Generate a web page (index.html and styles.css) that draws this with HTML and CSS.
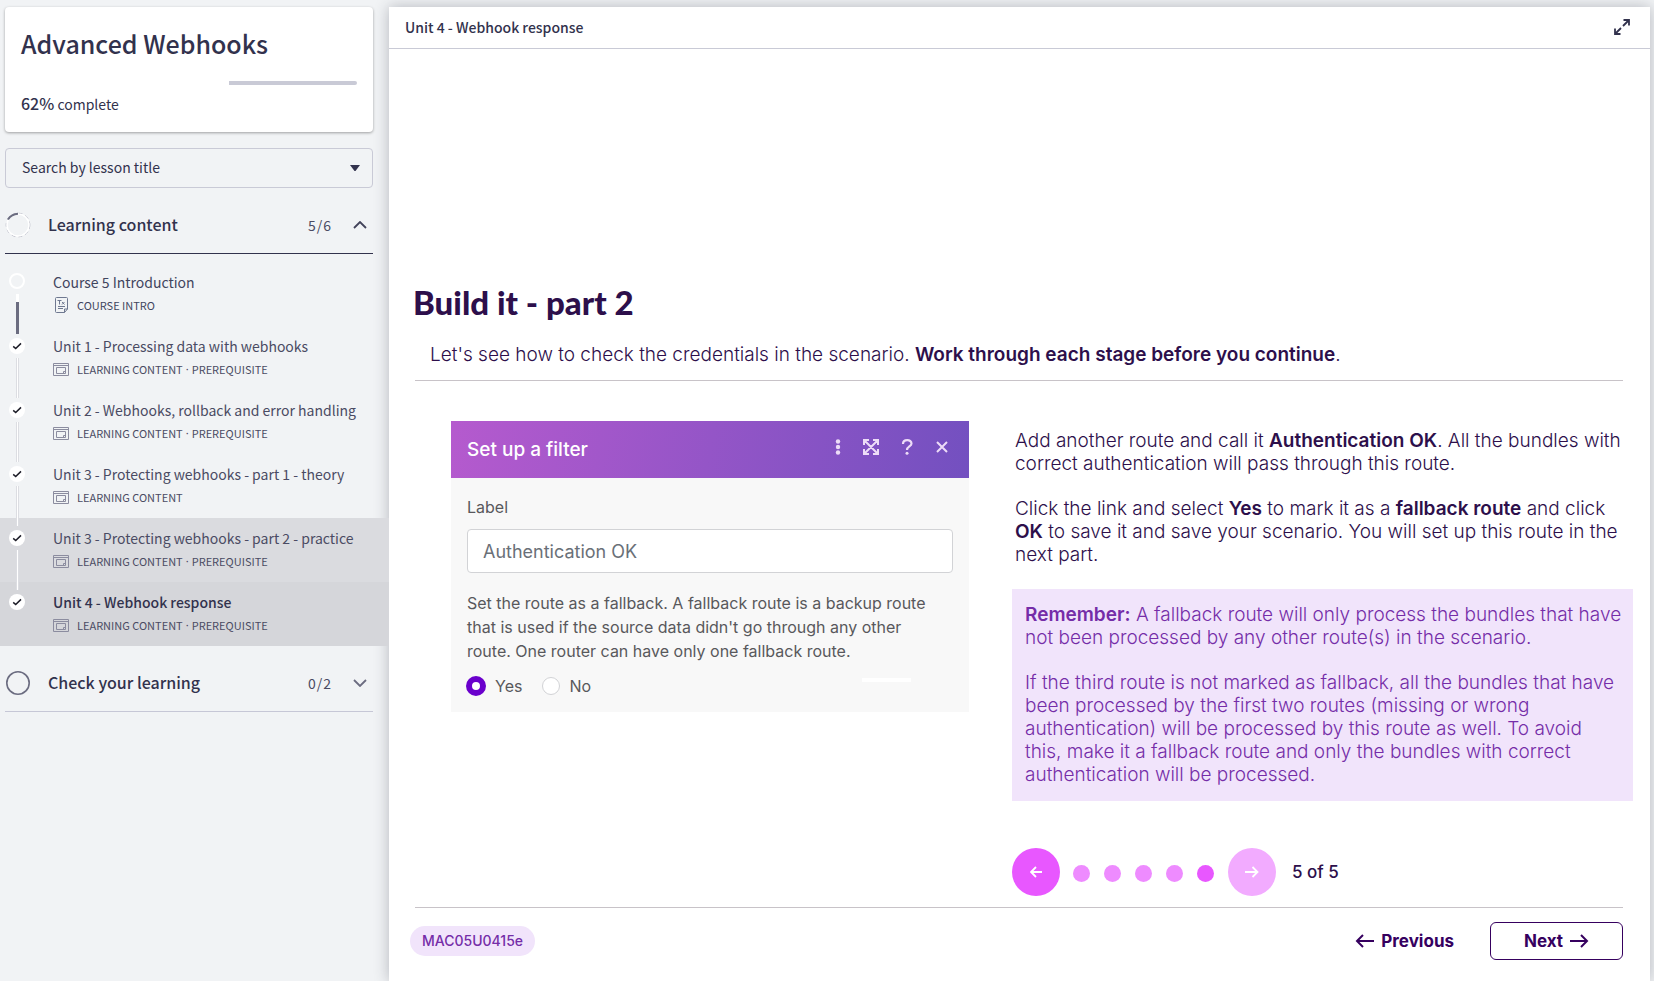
FILE: index.html
```html
<!DOCTYPE html>
<html lang="en">
<head>
<meta charset="utf-8">
<title>Advanced Webhooks</title>
<link rel="stylesheet" href="styles.css">
</head>
<body>
<svg class="sprite" aria-hidden="true">
  <symbol id="i-check" viewBox="0 0 16 16"><path d="M4.2 8.4 6.7 10.6 12 5.4" fill="none" stroke="#1d1d28" stroke-width="1.5"/></symbol>
  <symbol id="i-content" viewBox="0 0 16 13"><path d="M.5.5h15v12H.5zM.5 2.5h15M3.500 4.500h9v6h-9zM12.500 8.500h-2v2" fill="none" stroke="#8b8c9f"/></symbol>
  <symbol id="i-text" viewBox="0 0 13 16"><path d="M.5 1.500q0-1 1-1h10q1 0 1 1v10.500l-3 3.500H1.500q-1 0-1-1zM9.500 15.500v-3.500h3M3 9.500h7M3 11.500h5M2.500 3.500h4M4.500 3.500v4M7 5l2.500 2.500M9.500 5 7 7.500" fill="none" stroke="#6f7890"/></symbol>
  <symbol id="i-left" viewBox="0 0 20 14"><path d="M19 7H2M8 1 2 7l6 6" fill="none" stroke="currentColor" stroke-width="2"/></symbol>
  <symbol id="i-right" viewBox="0 0 20 14"><path d="M1 7h17M12 1l6 6-6 6" fill="none" stroke="currentColor" stroke-width="2"/></symbol>
</svg>
<div class="app">
  <aside class="sidebar">
    <section class="card">
      <h1 class="card-title">Advanced Webhooks</h1>
      <div class="progress"><div class="progress-rest" style="width:38%"></div></div>
      <p class="progress-text"><b>62%</b> complete</p>
    </section>
    <div class="search">
      <select class="search-select" aria-label="Search by lesson title"><option>Search by lesson title</option></select>
      <svg class="search-caret" width="10" height="6" viewBox="0 0 10 6"><path d="M0 0h10L5.500 6h-1z" fill="#32324d"/></svg>
    </div>

    <button class="section section-open" type="button">
      <svg width="26" height="26" viewBox="0 0 26 26" fill="none"><circle cx="13" cy="13" r="11.800" stroke="#b4b5c2" stroke-dasharray="4 3"/><circle cx="13" cy="13" r="11" stroke="#fff" stroke-width="1.500"/><path d="M3 7.500Q6.500 2 13 1.800" stroke="#6b6c80" stroke-width="2"/></svg>
      <span class="section-name">Learning content</span>
      <span class="section-count">5/6</span>
      <svg width="14" height="8" viewBox="0 0 14 8"><path d="M1 7l6-6 6 6" fill="none" stroke="#42435a" stroke-width="1.800"/></svg>
    </button>
    <ul class="lessons">
      <li class="lesson first">
        <span class="mark hollow"></span><span class="track"></span>
        <a class="lesson-link" href="#"><span class="lesson-title">Course 5 Introduction</span>
        <span class="meta"><span class="meta-icon"><svg width="13" height="16"><use href="#i-text"/></svg></span>COURSE INTRO</span></a>
      </li>
      <li class="lesson">
        <span class="mark"><svg width="16" height="16"><use href="#i-check"/></svg></span><span class="track"></span>
        <a class="lesson-link" href="#"><span class="lesson-title">Unit 1 - Processing data with webhooks</span>
        <span class="meta"><span class="meta-icon"><svg width="16" height="13"><use href="#i-content"/></svg></span>LEARNING CONTENT<i class="sep">·</i>PREREQUISITE</span></a>
      </li>
      <li class="lesson">
        <span class="mark"><svg width="16" height="16"><use href="#i-check"/></svg></span><span class="track"></span>
        <a class="lesson-link" href="#"><span class="lesson-title">Unit 2 - Webhooks, rollback and error handling</span>
        <span class="meta"><span class="meta-icon"><svg width="16" height="13"><use href="#i-content"/></svg></span>LEARNING CONTENT<i class="sep">·</i>PREREQUISITE</span></a>
      </li>
      <li class="lesson">
        <span class="mark"><svg width="16" height="16"><use href="#i-check"/></svg></span><span class="track"></span>
        <a class="lesson-link" href="#"><span class="lesson-title">Unit 3 - Protecting webhooks - part 1 - theory</span>
        <span class="meta"><span class="meta-icon"><svg width="16" height="13"><use href="#i-content"/></svg></span>LEARNING CONTENT</span></a>
      </li>
      <li class="lesson hover">
        <span class="mark"><svg width="16" height="16"><use href="#i-check"/></svg></span><span class="track"></span>
        <a class="lesson-link" href="#"><span class="lesson-title">Unit 3 - Protecting webhooks - part 2 - practice</span>
        <span class="meta"><span class="meta-icon"><svg width="16" height="13"><use href="#i-content"/></svg></span>LEARNING CONTENT<i class="sep">·</i>PREREQUISITE</span></a>
      </li>
      <li class="lesson current">
        <span class="mark"><svg width="16" height="16"><use href="#i-check"/></svg></span>
        <a class="lesson-link" href="#"><span class="lesson-title">Unit 4 - Webhook response</span>
        <span class="meta"><span class="meta-icon"><svg width="16" height="13"><use href="#i-content"/></svg></span>LEARNING CONTENT<i class="sep">·</i>PREREQUISITE</span></a>
      </li>
    </ul>
    <button class="section" type="button">
      <svg width="26" height="26" viewBox="0 0 26 26"><circle cx="13" cy="13" r="11.200" fill="none" stroke="#6b6c80" stroke-width="1.600"/></svg>
      <span class="section-name">Check your learning</span>
      <span class="section-count">0/2</span>
      <svg width="14" height="8" viewBox="0 0 14 8"><path d="M1 1l6 6 6-6" fill="none" stroke="#6b6c80" stroke-width="1.800"/></svg>
    </button>
  </aside>

  <main class="main">
    <header class="topbar">
      <h2 class="topbar-title">Unit 4 - Webhook response</h2>
      <button class="plain" type="button" aria-label="Full screen"><svg width="18" height="18" viewBox="0 0 18 18"><path d="M10 8l6-6M10.500 2H16v5.500M8 10l-6 6M2 10.500V16h5.500" fill="none" stroke="#32324d" stroke-width="1.800"/></svg></button>
    </header>
    <article class="content">
      <h3 class="heading">Build it - part 2</h3>
      <p class="intro">Let's see how to check the credentials in the scenario. <b>Work through each stage before you continue</b>.</p>
      <div class="columns">
        <form class="filter">
          <div class="filter-head">
            <h4 class="filter-title">Set up a filter</h4>
            <button class="plain" type="button" aria-label="More"><svg width="6" height="16" viewBox="0 0 6 16" fill="#eddcf7"><circle cx="3" cy="2.500" r="2.200"/><circle cx="3" cy="8" r="2.200"/><circle cx="3" cy="13.500" r="2.200"/></svg></button>
            <button class="plain" type="button" aria-label="Expand"><svg width="16" height="16" viewBox="0 0 16 16" fill="none" stroke="#eddcf7" stroke-width="2"><path d="M2 2l12 12M14 2 2 14M1 6V1h5M10 1h5v5M15 10v5h-5M6 15H1v-5"/></svg></button>
            <button class="plain" type="button" aria-label="Help"><svg width="12" height="16" viewBox="0 0 12 16"><path d="M2 5C2 0 10.500 0 10.500 4.500 10.500 7.500 6 7.500 6 11" fill="none" stroke="#eddcf7" stroke-width="2.200"/><circle cx="6" cy="14.300" r="1.500" fill="#eddcf7"/></svg></button>
            <button class="plain" type="button" aria-label="Close"><svg width="14" height="12" viewBox="0 0 14 12"><path d="M2 1l10 10M12 1 2 11" stroke="#eddcf7" stroke-width="2"/></svg></button>
          </div>
          <div class="filter-body">
            <label class="filter-label" for="label">Label</label>
            <input class="filter-input" id="label" type="text" value="Authentication OK">
            <p class="filter-help">Set the route as a fallback. A fallback route is a backup route that is used if the source data didn't go through any other route. One router can have only one fallback route.</p>
            <div class="radios">
              <input class="radio" type="radio" name="fallback" id="yes" checked><label for="yes">Yes</label>
              <input class="radio" type="radio" name="fallback" id="no"><label for="no">No</label>
              <span class="dash"></span>
            </div>
          </div>
        </form>
        <div class="copy">
          <div class="steps">
            <p>Add another route and call it <b>Authentication OK</b>. All the bundles with correct authentication will pass through this route.</p>
            <p>Click the link and select <b>Yes</b> to mark it as a <b>fallback route</b> and click <b>OK</b> to save it and save your scenario. You will set up this route in the next part.</p>
          </div>
          <div class="callout">
            <p><b>Remember:</b> A fallback route will only process the bundles that have not been processed by any other route(s) in the scenario.</p>
            <p>If the third route is not marked as fallback, all the bundles that have been processed by the first two routes (missing or wrong authentication) will be processed by this route as well. To avoid this, make it a fallback route and only the bundles with correct authentication will be processed.</p>
          </div>
          <nav class="pager" aria-label="Stages">
            <button class="round" type="button" aria-label="Previous stage"><svg width="12" height="12" viewBox="0 0 12 12"><path d="M12 6H1M6 1 1 6l5 5" fill="none" stroke="#fff" stroke-width="1.800"/></svg></button>
            <span class="dots"><span class="dot"></span><span class="dot"></span><span class="dot"></span><span class="dot"></span><span class="dot on"></span></span>
            <button class="round faded" type="button" aria-label="Next stage"><svg width="14" height="12" viewBox="0 0 14 12"><path d="M0 6h12M7.500 1l5 5-5 5" fill="none" stroke="#fff" stroke-width="1.800"/></svg></button>
            <span class="count">5 of 5</span>
          </nav>
        </div>
      </div>
      <footer class="footer">
        <span class="chip">MAC05U0415e</span>
        <button class="nav-btn" type="button"><svg width="20" height="14"><use href="#i-left"/></svg>Previous</button>
        <button class="nav-btn boxed" type="button">Next<svg width="20" height="14"><use href="#i-right"/></svg></button>
      </footer>
    </article>
  </main>
</div>
</body>
</html>
```
FILE: styles.css
```css
* { box-sizing: border-box; }
body { margin: 0; background: #f1f3f5; color: #32324d; font-family: "Noto Sans CJK SC", "Noto Sans", sans-serif; }
h1, h2, h3, h4, p, ul { margin: 0; padding: 0; }
button { font: inherit; color: inherit; background: none; border: 0; padding: 0; cursor: pointer; }
svg { display: block; flex: none; }
b { font-weight: 600; }
.sprite { position: absolute; width: 0; height: 0; }
.app { display: flex; min-height: 100vh; padding: 7px 4px 0 0; }

.sidebar { flex: none; width: 389px; }
.card { margin: 0 16px 0 5px; padding: 16px 16px 17px; background: #fff; border-radius: 4px; box-shadow: 0 1px 3px rgba(0, 0, 0, .35); }
.card-title { font-size: 25px; line-height: 40px; font-weight: 500; }
.progress { display: flex; justify-content: flex-end; margin-top: 18px; }
.progress-rest { height: 4px; background: #c9cad6; border-radius: 0 2px 2px 0; }
.progress-text { margin-top: 7px; font-size: 14px; line-height: 22px; }
.progress-text b { font-size: 16px; font-weight: 500; }
.search { position: relative; margin: 16px 16px 8px 5px; }
.search-select { display: block; width: 100%; height: 40px; padding: 0 16px 2px; appearance: none; border: 1px solid #c9cad6; border-radius: 4px; background: transparent; color: #32324d; font-family: inherit; font-size: 14px; }
.search-caret { position: absolute; right: 13px; top: 17px; pointer-events: none; }
.section { display: flex; align-items: center; width: 368px; height: 58px; margin-left: 5px; padding-right: 6px; border-bottom: 1px solid #c6c7d6; text-align: left; }
.section-open { border-color: #32324d; }
.section-name { flex: 1; margin-left: 17px; padding-bottom: 2px; font-size: 16px; font-weight: 500; }
.section-count { margin-right: 21px; font-size: 14px; letter-spacing: 1px; color: #4a4b63; }

.lessons { list-style: none; margin: 8px 0; }
.lesson { position: relative; height: 64px; display: flex; }
.mark { flex: none; width: 16px; height: 16px; margin: 12px 28px 0 9px; border-radius: 50%; background: #fff; }
.hollow { margin-top: 11px; background: none; border: 2px solid #fff; }
.track { position: absolute; z-index: 1; left: 16px; top: 32px; width: 3px; height: 40px; background: #fff; border: solid #dcdde2; border-width: 0 1px; }
.first .track { border-width: 8px 0 0; border-color: #fff; background: #6b6c80; }
.hover { background: #dadbdf; }
.current { background: #d5d6da; }
.lesson-link { padding-top: 8px; color: #4a4b63; text-decoration: none; white-space: nowrap; }
.first .lesson-link { color: #41455e; }
.lesson-title { display: block; font-size: 14px; line-height: 24px; }
.current .lesson-title { font-weight: 500; color: #32324d; }
.meta { display: flex; align-items: center; font-size: 11px; line-height: 22px; }
.meta-icon { width: 16px; margin-right: 8px; display: flex; justify-content: center; }
.sep { width: 9px; font-family: "Noto Sans", sans-serif; text-align: center; font-style: normal; }

.main { flex: 1; min-width: 0; background: #fff; box-shadow: 0 0 14px rgba(40, 42, 60, .3); font-family: Inter, sans-serif; color: #2d0f4b; }
.topbar { display: flex; align-items: center; justify-content: space-between; height: 42px; padding: 0 19px 2px 16px; border-bottom: 1px solid #c9cad6; color: #32324d; font-family: "Noto Sans CJK SC", "Noto Sans", sans-serif; }
.topbar-title { font-size: 14px; font-weight: 500; }
.content { padding: 231px 27px 20px 24px; font-size: 19px; line-height: 23px; font-weight: 300; }
.heading { font-family: Lato, Inter, sans-serif; font-size: 33px; line-height: 44px; font-weight: 900; }
.intro { margin: 19px 0 0 2px; padding: 0 0 14px 15px; border-bottom: 1px solid #c8c3c8; }
.columns { display: grid; grid-template-columns: 518px minmax(0, 1fr); column-gap: 43px; align-items: start; margin: 40px -10px 0 38px; }

.filter { background: #f8f8f8; font-weight: 400; color: #58585c; }
.filter-head { display: flex; align-items: center; gap: 22px; height: 57px; padding: 0 20px 5px 16px; background: linear-gradient(100deg, #b55ace, #7350c0); color: #fff; }
.filter-title { flex: 1; padding-top: 5px; font-size: 19px; font-weight: 500; }
.filter-body { padding: 18px 16px 14px; font-size: 16px; }
.filter-label { display: block; line-height: 22px; }
.filter-input { display: block; width: 100%; height: 44px; margin: 11px 0 18px; padding: 0 15px; border: 1px solid #d2d3d6; border-radius: 4px; background: #fff; color: #6a7078; font: 400 18px Inter, sans-serif; }
.filter-help { padding-right: 16px; line-height: 24px; }
.radios { display: flex; align-items: center; margin: 11px 0 0 -1px; height: 24px; }
.radio { appearance: none; width: 18px; height: 18px; margin: 0; border: 1px solid #d2d3d6; border-radius: 50%; background: #fff; }
.radio:checked { width: 20px; height: 20px; border: 6px solid #6a00cc; }
.radios label { margin: 0 20px 0 9px; }
.dash { width: 49px; height: 4px; margin: 0 42px 12px auto; background: #fff; }

.copy p + p { margin-top: 22px; }
.steps { padding: 8px 8px 0 3px; }
.callout { margin-top: 23px; padding: 14px 10px 15px 13px; background: #f1e4fb; color: #752da8; }
.pager { display: flex; align-items: center; margin-top: 47px; font-size: 17px; font-weight: 500; }
.round { display: flex; align-items: center; justify-content: center; width: 48px; height: 48px; border-radius: 50%; background: #e857ff; }
.faded { background: #f2abff; }
.dots { display: flex; gap: 14px; padding: 3px 14px 0 13px; }
.dot { width: 17px; height: 17px; border-radius: 50%; background: #ee8bff; }
.on { background: #e857ff; }
.count { margin-left: 16px; }
.footer { display: flex; align-items: center; margin: 11px 0 0 2px; padding-top: 14px; border-top: 1px solid #c8c3c8; color: #36005f; font-size: 17px; }
.chip { margin: 0 auto 0 -5px; padding: 0 12px; border-radius: 15px; background: #f1e4fb; color: #752da8; font-size: 14px; line-height: 30px; font-weight: 500; }
.nav-btn { display: flex; align-items: center; justify-content: center; gap: 6px; height: 38px; font-weight: 700; }
.boxed { width: 133px; margin-left: 36px; border: 1px solid #36005f; border-radius: 6px; }
```
